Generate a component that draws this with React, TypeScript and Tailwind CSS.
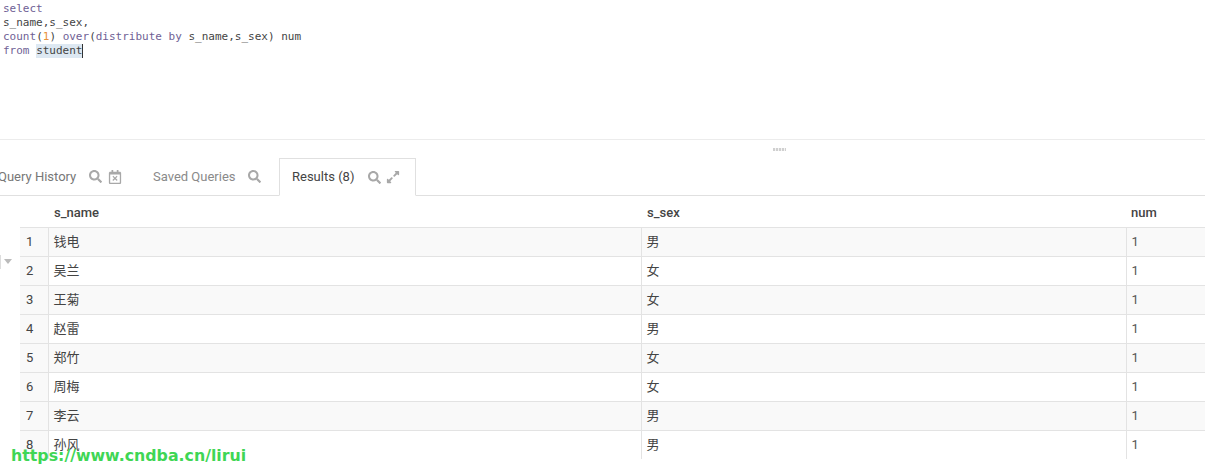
import { FaSearch, FaRegCalendarTimes, FaExpandAlt } from 'react-icons/fa'

const rows = [
  ['钱电', '男'],
  ['吴兰', '女'],
  ['王菊', '女'],
  ['赵雷', '男'],
  ['郑竹', '女'],
  ['周梅', '女'],
  ['李云', '男'],
  ['孙风', '男'],
]

const kw = 'text-[#6f5f95]'

export default function App() {
  return (
    <div className="relative h-[471px] w-[1205px] overflow-hidden bg-white font-['Roboto','Noto_Sans_CJK_SC',sans-serif] text-[13px] text-[#444]">
      <div className="h-[140px] border-b border-[#ececec] pl-[3px] pt-[2px] font-['DejaVu_Sans_Mono',monospace] text-[11px] leading-[14px] text-[#444]">
        <div className={kw}>select</div>
        <div>s_name,s_sex,</div>
        <div>
          <span className={kw}>count</span>(<span className="text-[#e8913a]">1</span>) <span className={kw}>over</span>(<span className={kw}>distribute by</span> s_name,s_sex) num
        </div>
        <div className="flex">
          <span className={kw}>from</span>
          <span>&nbsp;</span>
          <span className="border-r border-[#333] bg-[#dde8f2]">student</span>
        </div>
      </div>

      <div className="flex h-[18px] items-center justify-center pl-[354px]">
        <div className="h-[3px] w-[13px] bg-[repeating-linear-gradient(90deg,#d0d0d0_0,#d0d0d0_2px,#f4f4f4_2px,#f4f4f4_3px)]" />
      </div>

      <div className="-ml-[2px] flex h-[38px] items-stretch border-b border-[#e0e0e0]">
        <div className="flex w-[135px] items-center text-[#777]">
          <span>Query History</span>
          <FaSearch className="ml-[13px] text-[13px] text-[#a8a8a8]" />
          <FaRegCalendarTimes className="ml-[6px] text-[14px] text-[#a8a8a8]" />
        </div>
        <div className="flex w-[146px] items-center pl-[20px] text-[#8a8a8a]">
          <span>Saved Queries</span>
          <FaSearch className="ml-[12px] text-[13px] text-[#a8a8a8]" />
        </div>
        <div className="-mb-px flex w-[137px] items-center border border-b-white border-[#e0e0e0] bg-white pl-[12px] text-[#444]">
          <span>Results (8)</span>
          <FaSearch className="ml-[14px] text-[13px] text-[#a8a8a8]" />
          <FaExpandAlt className="ml-[5px] text-[14px] text-[#a8a8a8]" />
        </div>
      </div>

      <div className="h-[263px] overflow-hidden pl-[20px]">
        <table className="w-[1185px] table-fixed border-collapse">
          <thead>
            <tr className="h-[31px]">
              <th className="w-[28px]" />
              <th className="w-[593px] pl-[6px] pt-[2px] text-left text-[13px] font-medium">s_name</th>
              <th className="w-[485px] pl-[6px] pt-[2px] text-left text-[13px] font-medium">s_sex</th>
              <th className="pl-[5px] pt-[2px] text-left text-[13px] font-medium">num</th>
            </tr>
          </thead>
          <tbody>
            {rows.map((r, i) => (
              <tr key={i} className={`h-[29px] border-t border-[#e3e3e3] ${i % 2 === 0 ? 'bg-[#f9f9f9]' : 'bg-white'}`}>
                <td className="bg-[#f9f9f9] pl-[6px]">{i + 1}</td>
                <td className="border-l border-[#e3e3e3] pl-[5px]">{r[0]}</td>
                <td className="border-l border-[#e3e3e3] pl-[5px]">{r[1]}</td>
                <td className="border-l border-[#e3e3e3] pl-[5px] text-[#555]">1</td>
              </tr>
            ))}
          </tbody>
        </table>
      </div>

      {/* collapse handle at the left edge */}
      <div className="absolute left-0 top-[255px] h-[14px] w-px bg-[#ddd]" />
      <div className="absolute left-[4px] top-[259px] h-0 w-0 border-x-[4px] border-t-[5px] border-x-transparent border-t-[#bbb]" />

      {/* watermark */}
      <div className="absolute left-[11px] top-[447px] font-['DejaVu_Sans',sans-serif] text-[15.8px] font-bold leading-[18px] text-[#3fd655]">
        https://www.cndba.cn/lirui
      </div>
    </div>
  )
}
